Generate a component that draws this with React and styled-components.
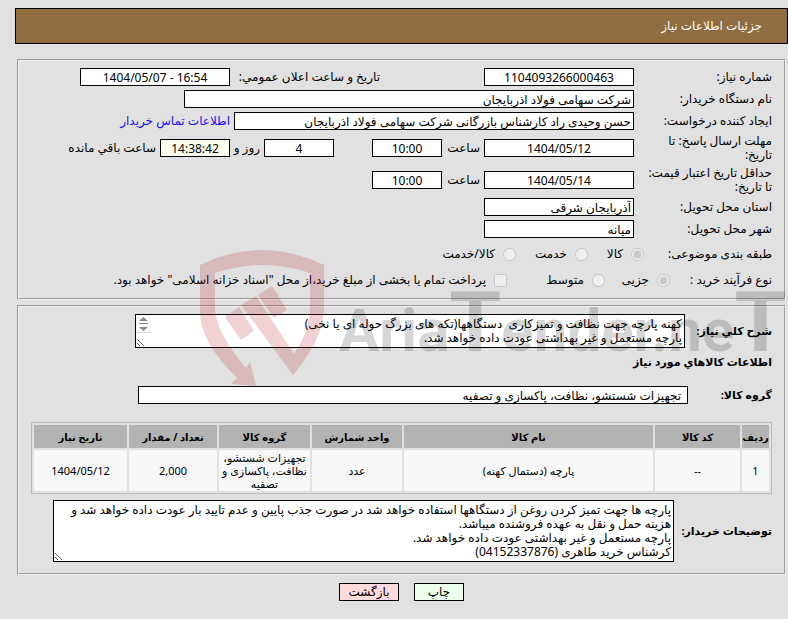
import React from 'react';
import styled, { createGlobalStyle } from 'styled-components';

const GlobalStyle = createGlobalStyle`
  * {
    box-sizing: border-box;
  }
  body {
    margin: 0;
    background: #e1e1e1;
    color: #000;
    font-family: 'Noto Sans', 'DejaVu Sans', sans-serif;
    font-size: 12px;
    line-height: 14px;
  }
`;

const Page = styled.div`
  position: relative;
  padding: 8px 0 16px;
`;

const Header = styled.h1`
  display: flex;
  align-items: center;
  height: 36px;
  margin: 0 0 0 15px;
  padding: 0 25px;
  border: 1px solid #000;
  background: #8f6d40;
  color: #fff;
  font-size: 12px;
  font-weight: 400;
`;

const Panel = styled.section`
  margin: ${(p) => p.$top} 2px 0 17px;
  padding: 7px 12px ${(p) => p.$bottom || '8px'};
  border: 2px groove #f0f0f0;
`;

const Rows = styled.div`
  display: flex;
  flex-direction: column;
  gap: 4px;
`;

const Row = styled.div`
  display: flex;
  align-items: center;
  min-height: ${(p) => p.$height || '18px'};
`;

const Label = styled.label`
  flex: none;
  width: ${(p) => p.$width || '138px'};
  padding-left: ${(p) => p.$inset || '0'};
  white-space: ${(p) => (p.$wrap ? 'normal' : 'nowrap')};
`;

const Field = styled.input`
  flex: 0 1 ${(p) => p.$width};
  min-width: 0;
  width: ${(p) => p.$width};
  height: 18px;
  margin: 0;
  padding: 0 ${(p) => p.$inset || '2px'};
  border: 1px solid #000;
  border-radius: 0;
  background: ${(p) => p.$tint || '#fff'};
  color: #000;
  font-family: inherit;
  font-size: 12px;
  text-align: ${(p) => (p.$center ? 'center' : 'right')};
`;

const Word = styled.span`
  flex: none;
  margin: 0 4px;
  white-space: nowrap;
`;

const Spacer = styled.span`
  flex: 0 1 ${(p) => p.$width};
`;

const ContactLink = styled.a`
  margin-right: 4px;
  color: #1a0dff;
  text-decoration: none;
  white-space: nowrap;
`;

const Option = styled.label`
  display: flex;
  flex: none;
  align-items: center;
  gap: 8px;
  width: ${(p) => p.$width || 'auto'};
  white-space: nowrap;

  input {
    flex: none;
    width: 13px;
    height: 13px;
    margin: 0;
  }
`;

const BoldLabel = styled.label`
  flex: none;
  width: ${(p) => p.$width};
  font-weight: 700;
  font-size: 11px;
  white-space: nowrap;
`;

const SubTitle = styled.h2`
  margin: 7px 0 17px;
  font-size: 11px;
  line-height: 14px;
`;

const AreaBox = styled.div`
  position: relative;
  flex: 0 1 ${(p) => p.$width};
  min-width: 0;
`;

const Area = styled.textarea`
  display: block;
  width: 100%;
  height: ${(p) => p.$height};
  margin: 0;
  padding: 2px;
  border: 1px solid #000;
  border-radius: 0;
  background: #fff;
  color: #000;
  font-family: inherit;
  font-size: 12px;
  line-height: 14px;
  overflow: hidden;
  resize: both;
`;

const ScrollArrows = styled.svg`
  position: absolute;
  top: 1px;
  left: 1px;
`;

const ItemsTable = styled.table`
  width: 100%;
  margin: 18px 0 6px;
  border: 1px solid #bbb;
  border-collapse: separate;
  border-spacing: 2px;
  table-layout: fixed;
  text-align: center;

  th {
    height: 23px;
    padding: 0;
    background: #b3b3b3;
    font-size: 10px;
    white-space: nowrap;
  }
  td {
    height: 41px;
    padding: 0;
    background: #f7f7f7;
    font-size: 11px;
    line-height: 13px;
  }
`;

const Actions = styled.div`
  display: flex;
  justify-content: center;
  gap: 15px;
  margin: 8px 0 0 15px;
`;

const Button = styled.button`
  width: ${(p) => p.$width};
  height: 18px;
  padding: 0;
  border: 1px solid #000;
  background: ${(p) => p.$tint};
  color: #000;
  font-family: inherit;
  font-size: 12px;
  line-height: 14px;
`;

const Watermark = styled.svg`
  position: absolute;
  top: 245px;
  right: 0;
  pointer-events: none;
`;

const columns = [
  { title: 'رديف', width: '27px', value: '1' },
  { title: 'کد کالا', width: '85px', value: '--' },
  { title: 'نام کالا', value: 'پارچه (دستمال کهنه)' },
  { title: 'واحد شمارش', width: '90px', value: 'عدد' },
  { title: 'گروه کالا', width: '91px', value: 'تجهیزات شستشو، نظافت، پاکسازی و تصفیه' },
  { title: 'تعداد / مقدار', width: '88px', value: '2,000' },
  { title: 'تاريخ نياز', width: '93px', value: '1404/05/12' },
];

const summary =
  'کهنه پارچه جهت نظافت و تمیزکاری  دستگاهها(تکه های بزرگ حوله ای یا نخی)\nپارچه مستعمل و غیر بهداشتی عودت داده خواهد شد.';

const notes =
  'پارچه ها جهت تمیز کردن روغن از دستگاهها استفاده خواهد شد در صورت جذب پایین و عدم تایید بار عودت داده خواهد شد و هزینه حمل و نقل به عهده فروشنده میباشد.\nپارچه مستعمل و غیر بهداشتی عودت داده خواهد شد.\nکرشناس خرید طاهری (04152337876)';

const App = () => {
  return (
    <Page dir="rtl" lang="fa">
      <GlobalStyle />
      <Header>جزئیات اطلاعات نیاز</Header>

      <Panel $top="15px">
        <Rows>
          <Row>
            <Label htmlFor="number">شماره نیاز:</Label>
            <Field id="number" $width="150px" $center readOnly value="1104093266000463" />
            <Spacer $width="104px" />
            <Label htmlFor="announced" $width="150px">
              تاریخ و ساعت اعلان عمومي:
            </Label>
            <Field id="announced" $width="150px" $center readOnly dir="ltr" value="1404/05/07 - 16:54" />
          </Row>
          <Row>
            <Label htmlFor="buyer">نام دستگاه خریدار:</Label>
            <Field id="buyer" $width="450px" readOnly value="شرکت سهامی فولاد اذربایجان" />
          </Row>
          <Row>
            <Label htmlFor="creator">ایجاد کننده درخواست:</Label>
            <Field
              id="creator"
              $width="400px"
              readOnly
              value="حسن وحیدی راد کارشناس بازرگانی شرکت سهامی فولاد اذربایجان"
            />
            <ContactLink href="#contact">اطلاعات تماس خریدار</ContactLink>
          </Row>
          <Row $height="28px">
            <Label htmlFor="deadline" $wrap $inset="12px">
              مهلت ارسال پاسخ: تا تاریخ:
            </Label>
            <Field id="deadline" $width="150px" $center readOnly value="1404/05/12" />
            <Label as="span" $width="42px" $inset="4px">
              <Word>ساعت</Word>
            </Label>
            <Field aria-label="ساعت" $width="70px" $center readOnly value="10:00" />
            <Spacer $width="38px" />
            <Field id="days" $width="70px" $center readOnly value="4" />
            <Label htmlFor="days" $width="34px">
              <Word>روز و</Word>
            </Label>
            <Field id="remaining" $width="70px" $center $tint="#fffff0" readOnly value="14:38:42" />
            <Word as="label" htmlFor="remaining">
              ساعت باقي مانده
            </Word>
          </Row>
          <Row $height="28px">
            <Label htmlFor="validity" $wrap $inset="12px">
              حداقل تاریخ اعتبار قیمت: تا تاریخ:
            </Label>
            <Field id="validity" $width="150px" $center readOnly value="1404/05/14" />
            <Label as="span" $width="42px" $inset="4px">
              <Word>ساعت</Word>
            </Label>
            <Field aria-label="ساعت" $width="70px" $center readOnly value="10:00" />
          </Row>
          <Row>
            <Label htmlFor="province">استان محل تحویل:</Label>
            <Field id="province" $width="150px" readOnly value="آذربایجان شرقی" />
          </Row>
          <Row>
            <Label htmlFor="city">شهر محل تحویل:</Label>
            <Field id="city" $width="150px" readOnly value="میانه" />
          </Row>
          <Row $height="24px">
            <Label as="span" $width="128px">
              طبقه بندی موضوعی:
            </Label>
            <Option $width="56px">
              <input type="radio" name="subject" disabled defaultChecked />
              کالا
            </Option>
            <Option $width="72px">
              <input type="radio" name="subject" disabled />
              خدمت
            </Option>
            <Option>
              <input type="radio" name="subject" disabled />
              کالا/خدمت
            </Option>
          </Row>
          <Row $height="20px">
            <Label as="span" $width="102px">
              نوع فرآیند خرید :
            </Label>
            <Option $width="65px">
              <input type="radio" name="process" disabled defaultChecked />
              جزیی
            </Option>
            <Option $width="98px">
              <input type="radio" name="process" disabled />
              متوسط
            </Option>
            <Option>
              <input type="checkbox" disabled />
              پرداخت تمام یا بخشی از مبلغ خرید،از محل "اسناد خزانه اسلامی" خواهد بود.
            </Option>
          </Row>
        </Rows>
      </Panel>

      <Panel $top="5px" $bottom="11px">
        <Row>
          <BoldLabel htmlFor="summary" $width="87px">
            شرح كلي نياز:
          </BoldLabel>
          <AreaBox $width="550px">
            <Area id="summary" $height="34px" readOnly value={summary} />
            <ScrollArrows width="15" height="18" viewBox="0 0 15 18">
              <rect width="15" height="18" fill="#fafafa" />
              <path d="M3 6l4.500-4 4.500 4zM3 12l4.500 4 4.500-4z" fill="#8a8a8a" />
              <path d="M3 8.500h9" stroke="#8a8a8a" />
              <path d="M0 17.500h15" stroke="#d5d5d5" />
            </ScrollArrows>
          </AreaBox>
        </Row>
        <SubTitle>اطلاعات كالاهاي مورد نياز</SubTitle>
        <Row>
          <BoldLabel htmlFor="group" $width="84px">
            گروه کالا:
          </BoldLabel>
          <Field
            id="group"
            $width="550px"
            $inset="6px"
            readOnly
            value="تجهیزات شستشو، نظافت، پاکسازی و تصفیه"
          />
        </Row>
        <ItemsTable>
          <colgroup>
            {columns.map((c) => (
              <col key={c.title} style={{ width: c.width }} />
            ))}
          </colgroup>
          <thead>
            <tr>
              {columns.map((c) => (
                <th key={c.title}>{c.title}</th>
              ))}
            </tr>
          </thead>
          <tbody>
            <tr>
              {columns.map((c) => (
                <td key={c.title}>{c.value}</td>
              ))}
            </tr>
          </tbody>
        </ItemsTable>
        <Row>
          <BoldLabel htmlFor="notes" $width="98px">
            توضیحات خریدار:
          </BoldLabel>
          <AreaBox $width="621px">
            <Area id="notes" $height="62px" readOnly value={notes} />
          </AreaBox>
        </Row>
      </Panel>

      <Actions>
        <Button type="button" $width="50px" $tint="#ebffeb">
          چاپ
        </Button>
        <Button type="button" $width="60px" $tint="#ffdbdb">
          بازگشت
        </Button>
      </Actions>

      <Watermark width="590" height="145" viewBox="198 245 590 145" direction="ltr" aria-hidden="true">
        <g fill="#b51f2a" fillOpacity="0.2">
          <path d="M200 265Q262 235 324 265V308Q324 338 293 375L241 305L256 296L294 354Q310 330 310 308V273Q262 257 215 273V310Q217 334 246 368L250 362L256 386L231 384L237 378Q200 342 200 312z" />
          <path d="M225 317L239 307L254 331L241 340zM258 295L272 286L287 310L274 318z" />
        </g>
        <text
          x="339"
          y="351"
          fontFamily="Roboto, sans-serif"
          fontSize="60"
          fontWeight="700"
          fill="#000"
          fillOpacity="0.16"
        >
          Aria<tspan fontSize="84">T</tspan>ender.ne<tspan fontSize="84">T</tspan>
        </text>
      </Watermark>
    </Page>
  );
};

export default App;
